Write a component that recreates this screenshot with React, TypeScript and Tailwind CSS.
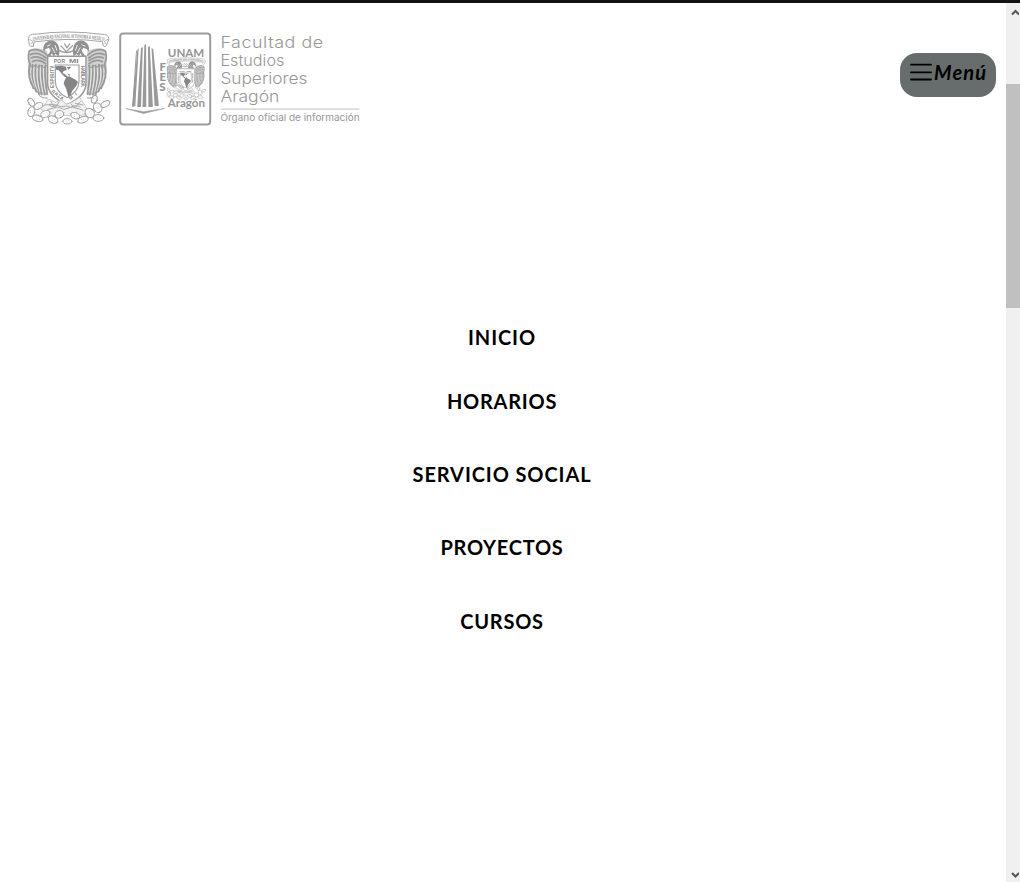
import React from "react";

const items = [
  { label: "INICIO", box: "h-[64px] tracking-[0.9px]" },
  { label: "HORARIOS", box: "h-[73px] tracking-[0.75px]" },
  { label: "SERVICIO SOCIAL", box: "h-[73px] tracking-[0.9px]" },
  { label: "PROYECTOS", box: "h-[74px] tracking-[0.75px]" },
  { label: "CURSOS", box: "h-[73px] tracking-[0.75px]" },
];

const pads = [
  [34, 232, 8, 13, -35], [34, 260, 10, 15, 15], [53, 280, 16, 9, 15], [76, 267, 14, 10, -20],
  [99, 284, 15, 10, 25], [118, 268, 13, 11, -20], [142, 289, 13, 8, 0], [166, 272, 14, 9, 20],
  [189, 284, 16, 9, -20], [209, 264, 15, 13, 40], [235, 279, 16, 10, 0], [233, 248, 12, 15, -30],
  [256, 237, 14, 8, -30], [223, 223, 8, 12, 20], [55, 243, 14, 9, -30],
];

function Wing() {
  return (
    <g fill="none" stroke="#999999" strokeLinecap="round">
      <path d="M82 78C64 68 43 67 27 75C21 103 23 148 32 173C38 188 46 201 59 209L84 211Z" fill="#d2d2d2" stroke="none" />
      <path strokeWidth="5" d="M81 90C61 74 42 71 28 78C23 92 26 108 31 119M78 99C60 84 44 82 31 89M77 107C60 95 46 92 34 99M77 116C63 106 49 103 37 110" />
      <path strokeWidth="5.5" d="M29 122C24 143 28 168 41 190M38 120C33 142 37 172 49 200M47 119C43 144 47 174 57 207M57 121C53 145 57 175 65 209M66 122C63 147 67 175 74 209M76 121C73 143 75 166 81 207" />
      <path strokeWidth="3" d="M29 119l9 7 8-6 8 7 9-6 8 7 8-6M26 145l9 4M31 168l10 2M39 190l10 2M56 210c6 7 15 10 26 9" />
      <path stroke="white" strokeWidth="1.6" d="M34 130C30 148 34 169 44 186M43 128C39 149 43 174 53 197M53 130C49 150 53 178 60 200M62 130C59 150 63 179 69 202M71 130C69 151 72 179 77 200" />
    </g>
  );
}

function Bird() {
  return (
    <g>
      <path d="M79 94C90 84 92 74 87 68L76 73l-4 8c-5-11-1-24 9-30 12-9 28-4 33 8 5 11 7 24 1 35l-9-8-4 9-7-10-5 10z" fill="#919191" />
      <path d="M81 64l9-4M96 67l9 17M105 60l6 17M91 73l-3 10M91 57l2 1" stroke="white" strokeWidth="2.6" />
    </g>
  );
}

function Crest({ uid }: { uid: string }) {
  return (
    <g>
      <path d="M25 40q4-14 18-12Q143 14 246 28q18-1 21 13l-7 20q-5 8-11 0l-2-11Q143 36 42 51l-2 13q-10 3-12-5z" fill="white" stroke="#a4a4a4" strokeWidth="3" />
      <path d="M28 42l12 8M32 57q5-9 10 0M265 42l-13 8M260 57q-5-9-10 0" fill="none" stroke="#a4a4a4" strokeWidth="2.5" />
      <path id={uid} d="M39 48Q145 30 253 48" fill="none" />
      <text fill="#858585" fontFamily="Liberation Serif" fontWeight="700" fontSize="17">
        <textPath href={`#${uid}`} textLength="214" lengthAdjust="spacingAndGlyphs">UNIVERSIDAD NACIONAL AVTONOMA D MEXICO</textPath>
      </text>
      <Wing />
      <g transform="matrix(-1 0 0 1 284 0)"><Wing /></g>
      <path d="M117 76q23 13 44 0M122 62l17 18 20-19M133 56l8 12 9-12" fill="none" stroke="#a0a0a0" strokeWidth="4" />
      <Bird />
      <g transform="matrix(-1 0 0 1 277 0)"><Bird /></g>
      <path d="M83 94H198V176C197 207 169 226 141 239C111 226 84 207 83 176Z" fill="white" stroke="#999999" strokeWidth="4.5" />
      <path d="M106 120H177V169C177 194 160 208 141 218C121 208 106 194 106 169Z" fill="white" stroke="#a0a0a0" strokeWidth="3.5" />
      <g fill="#858585" fontFamily="Liberation Sans" fontWeight="700" fontSize="15">
        <text x="101" y="113" textLength="34">POR</text>
        <text x="147" y="113" textLength="29" lengthAdjust="spacingAndGlyphs">MI</text>
        <text transform="translate(101 189) rotate(-90)" fontSize="14" textLength="67">ESPIRITV</text>
        <text transform="translate(182 122) rotate(90)" fontSize="14" textLength="64">HABLARA</text>
        <text transform="translate(93 201) rotate(37)" fontSize="15" textLength="43">RAZA</text>
        <text transform="translate(151 226) rotate(-37)" fontSize="15" textLength="27">MI</text>
      </g>
      <path d="M107 124l16-2 15 3 2 10-9 3-3 6 9 5 5 5 6 4-2 4-14-8-8-9-8-9-8-2zM140 126l14-1-8 9zM139 157l9-3 10 6 9 4 7 7-5 11-7 9-6 8-4 12-7 5-3-13-4-13-7-14 3-10zM141 145l11 5-5 2z" fill="#858585" />
      <path d="M62 252l25-30 20 10 16-8 17 14 17-7 22-14 18 27 8 23-40 7-39-4-39 4z" fill="#f2f2f2" stroke="#b0b0b0" strokeWidth="2" />
      <path d="M70 243q13-9 26 2 14-9 28 0 17-5 28 2 16-10 30 0M82 254l31-8 19 7 25-7 34 10M92 228l12 21 15-20M152 237l14 11 16-19M87 238l22 2M165 235l25 5" stroke="#a9a9a9" fill="none" strokeWidth="3" />
      {pads.map(([x, y, rx, ry, a], i) => (
        <g key={i} transform={`translate(${x} ${y}) rotate(${a})`}>
          <ellipse rx={rx} ry={ry} fill="white" stroke="#a0a0a0" strokeWidth="3" />
          <path d="M-5-2h2M3-3h2M-2 3h2M6 2h2" stroke="#aaa" strokeWidth="2" />
          <path d={`M0 ${-ry}v-4M${rx} 0h4M${-rx} 0h-4`} stroke="#aaa" strokeWidth="2" />
        </g>
      ))}
    </g>
  );
}

function Logo() {
  return (
    <svg className="block h-[110px] w-[350px]" viewBox="20 25 350 110" role="img" aria-label="UNAM FES Aragón">
      <g transform="translate(20 25) scale(.33333)"><Crest uid="ribbon-large" /></g>
      <rect x="120.2" y="33.5" width="90" height="91" rx="3" fill="white" stroke="#9b9b9b" strokeWidth="2" />
      <g fill="#999999">
        <path d="M137.3 50l1.4-2-3.4 58-3.1 1zM141 48l1.8-1-1.8 60h-3.8zM144.4 45l1.7-1 .2 63h-3.8zM148 47l1.8-1 3.1 61h-4.5zM151.5 48l1.7 1 5.7 57h-4.3z" />
        <path d="M136 51l1-1-3.6 56-1.2.5z" />
        <path d="M125.6 108.5l18 3.2 21-3.2-21 5z" stroke="#999" strokeWidth=".5" />
      </g>
      <g fill="#949494" fontFamily="Lato" fontWeight="900">
        <text x="167.8" y="57.1" fontSize="12.2" fontWeight="700" textLength="36.5" lengthAdjust="spacingAndGlyphs">UNAM</text>
        <text x="159.6 159.6 159.3" y="70.8 80.8 91" fontSize="11.5">FES</text>
        <text x="167.8" y="106.7" fontSize="11" fontWeight="700" textLength="37.2" lengthAdjust="spacingAndGlyphs">Aragón</text>
      </g>
      <g transform="translate(163.3 54.4) scale(.158 .153)" stroke="#a0a0a0" strokeWidth=".5"><Crest uid="ribbon-small" /></g>
      <g fill="#979797" fontFamily="Inter, Lato" fontWeight="300" fontSize="15.3">
        <text x="220.4" y="47.5" textLength="103.3" letterSpacing=".5" lengthAdjust="spacingAndGlyphs">Facultad de</text>
        <text x="220.4" y="65.9" textLength="64" lengthAdjust="spacingAndGlyphs">Estudios</text>
        <text x="220.4" y="84.2" textLength="87" lengthAdjust="spacingAndGlyphs">Superiores</text>
        <text x="220.4" y="102.4" textLength="59" lengthAdjust="spacingAndGlyphs">Aragón</text>
        <text x="220.4" y="120.8" fontSize="9.5" fontWeight="400" textLength="139.2" lengthAdjust="spacingAndGlyphs">Órgano oficial de información</text>
      </g>
      <path d="M221 109.2H359.5" stroke="#cecece" strokeWidth="1.2" />
    </svg>
  );
}

export default function App() {
  return (
    <div className="flex h-[882px] w-[1020px] flex-col overflow-hidden border-t-[3px] border-[#111510] bg-white text-black">
      <div className="flex min-h-0 flex-1">
        <div className="flex w-[1006px] flex-col">
          <header className="flex h-[140px] items-start justify-between pl-5 pr-[10px] pt-[22px]">
            <Logo />
            <button className="mt-7 flex h-11 w-24 items-start rounded-[17px] bg-[#666d6c] pl-[10px] pt-[9px]">
              <svg className="mt-[1px] h-[18px] w-[23px]" viewBox="0 0 23 18" fill="none" stroke="black" strokeWidth="1.8" strokeLinecap="round">
                <path d="M1 1.7H21M1 9.3H21M1 16.5H21" />
              </svg>
              <span className="ml-[1px] font-[Lato] text-[20px] font-bold italic leading-[21px] tracking-[1.1px]">Menú</span>
            </button>
          </header>
          <nav className="mt-[183px] w-[1004px]">
            <ul className="flex flex-col text-center font-[Lato] text-[20px] font-bold leading-[23px]">
              {items.map(({ label, box }) => (
                <li key={label} className={box}><a href="#">{label}</a></li>
              ))}
            </ul>
          </nav>
        </div>
        <aside className="flex w-[14px] flex-col bg-[#f0f0f0]">
          <div className="h-[81px] pl-[5px] pt-[5px]">
            <svg className="h-2 w-2" viewBox="0 0 8 8" fill="none" stroke="#555" strokeWidth="2"><path d="M1 6.5L4.5 3 8 6.5" /></svg>
          </div>
          <div className="h-[224px] bg-[#c0c0c0]" />
          <div className="flex flex-1 items-end pb-[3px] pl-[5px]">
            <svg className="h-2 w-2" viewBox="0 0 8 8" fill="none" stroke="#555" strokeWidth="2"><path d="M1 2L4.5 5.5 8 2" /></svg>
          </div>
        </aside>
      </div>
    </div>
  );
}
